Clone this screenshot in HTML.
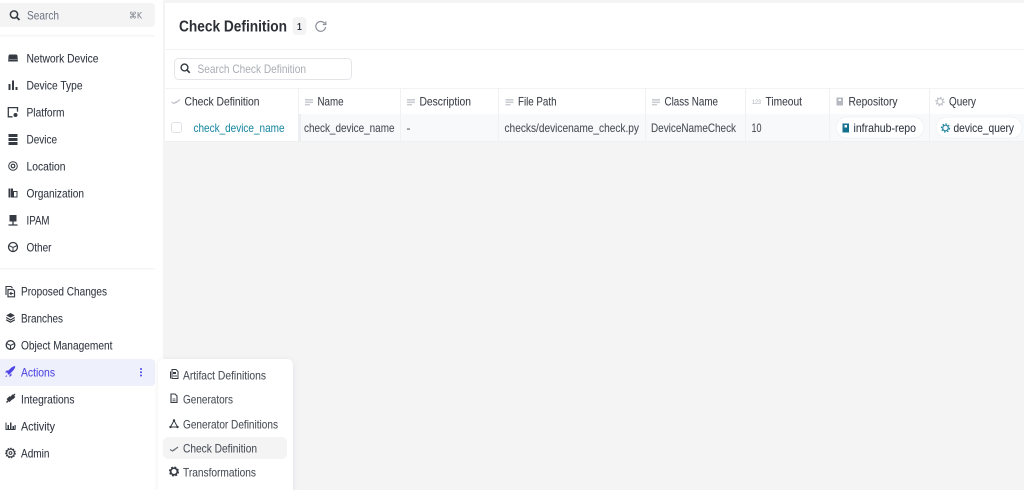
<!DOCTYPE html>
<html><head><meta charset="utf-8"><style>
html,body{margin:0;padding:0;width:1024px;height:490px;overflow:hidden;background:#f4f4f5}
svg{display:block;filter:blur(.3px)}
text{font-family:"Liberation Sans","DejaVu Sans",sans-serif;font-size:11.8px;fill:#3f3f46;stroke:rgba(50,55,65,.3);stroke-width:.2}
.n{fill:#2f3540}
.h{fill:#3a3e46}
.m{fill:#4b4f58}
.i{fill:#363b43;stroke:none}
.o{fill:none;stroke:#363b43;stroke-width:1.3}
.g{fill:#c9ccd1;stroke:none}
.go{fill:none;stroke:#bfc3c9;stroke-width:1.2}
</style></head><body>
<svg width="1024" height="490" viewBox="0 0 1024 490" xmlns="http://www.w3.org/2000/svg">
<defs><filter id="s" x="-20%" y="-20%" width="140%" height="140%"><feDropShadow dx="0" dy="1" stdDeviation="3" flood-color="#000" flood-opacity=".07"/></filter></defs>
<rect width="1024" height="490" fill="#f4f4f5"/>
<!-- sidebar -->
<rect width="163" height="490" fill="#fff"/>
<rect x="-6" y="3" width="161" height="24" rx="4" fill="#f4f4f5"/>
<circle cx="14" cy="14.500" r="3.600" class="o" style="stroke-width:1.500"/><path d="M16.600 17.100 19.500 20" class="o" style="stroke-width:1.700"/>
<text x="27" y="19.500" textLength="32" lengthAdjust="spacingAndGlyphs" style="fill:#6b7280;stroke:none">Search</text>
<text x="129" y="18.500" textLength="13" lengthAdjust="spacingAndGlyphs" style="font-size:9px;fill:#7a8089;stroke:none;font-family:'DejaVu Sans',sans-serif">⌘K</text>
<rect x="0" y="35" width="155" height="1.500" fill="#f6f6f7"/>
<rect x="0" y="268" width="155" height="1.500" fill="#f6f6f7"/>

<text class="n" x="26.500" y="62.300" textLength="72" lengthAdjust="spacingAndGlyphs">Network Device</text>
<text class="n" x="26.500" y="89.300" textLength="56" lengthAdjust="spacingAndGlyphs">Device Type</text>
<text class="n" x="26.500" y="116.300" textLength="38" lengthAdjust="spacingAndGlyphs">Platform</text>
<text class="n" x="26.500" y="143.300" textLength="30.500" lengthAdjust="spacingAndGlyphs">Device</text>
<text class="n" x="26.500" y="170.300" textLength="39" lengthAdjust="spacingAndGlyphs">Location</text>
<text class="n" x="26.500" y="197.300" textLength="57.500" lengthAdjust="spacingAndGlyphs">Organization</text>
<text class="n" x="26.500" y="224.300" textLength="23" lengthAdjust="spacingAndGlyphs">IPAM</text>
<text class="n" x="26.500" y="251.300" textLength="25" lengthAdjust="spacingAndGlyphs">Other</text>

<!-- top icons -->
<path d="M9.500 54.500h6.500q1.200 0 1.500 1.500l.3 5.500h-9.600l.3-5.500q.3-1.500 1-1.500z" class="i"/><rect x="9" y="59" width="8" height=".7" fill="#9aa0a8"/>
<rect x="8.500" y="84" width="2" height="6" class="i"/><rect x="12" y="80.500" width="2" height="9.500" class="i"/><rect x="15.500" y="87" width="2" height="3" class="i"/>
<path d="M12.500 116.800H8.300v-9.200h9.200v4" class="o"/><circle cx="15.500" cy="115" r="2" class="i"/>
<rect x="8.500" y="134" width="9" height="3" class="i"/><rect x="8.500" y="138" width="9" height="3" class="i"/><rect x="8.500" y="142" width="9" height="3" class="i"/>
<circle cx="13" cy="166" r="4.300" class="o" style="stroke-width:1"/><circle cx="13" cy="166" r="1.800" class="o" style="stroke-width:1.200"/>
<path d="M8.500 188.500h4.500v9h-4.500z" class="i"/><path d="M13.500 191.500h3.500v5.500h-3.500z" class="o" style="stroke-width:1"/><path d="M10.700 188.500v9" stroke="#fff" stroke-width=".5"/>
<rect x="9.500" y="215" width="7" height="6.500" class="i"/><path d="M13 221.500v3M8.500 225h9" class="o"/>
<circle cx="13" cy="247" r="4.500" class="o"/><path d="M8.800 245.500 13 247.500l4.200-2M13 247.500v4" class="o" style="stroke-width:1"/>

<text class="n" x="21" y="295.300" textLength="86" lengthAdjust="spacingAndGlyphs">Proposed Changes</text>
<text class="n" x="21" y="322.300" textLength="42" lengthAdjust="spacingAndGlyphs">Branches</text>
<text class="n" x="21" y="349.300" textLength="91.500" lengthAdjust="spacingAndGlyphs">Object Management</text>
<rect x="-6" y="359" width="161" height="27" rx="4" fill="#eef0fc"/>
<text x="21" y="376.300" textLength="34" lengthAdjust="spacingAndGlyphs" style="fill:#4f46e5;stroke:rgba(79,70,229,.3)">Actions</text>
<circle cx="141" cy="369" r="1" fill="#4f46e5"/><circle cx="141" cy="372.300" r="1" fill="#4f46e5"/><circle cx="141" cy="375.500" r="1" fill="#4f46e5"/>
<text class="n" x="21" y="403.300" textLength="53.500" lengthAdjust="spacingAndGlyphs">Integrations</text>
<text class="n" x="21" y="430.300" textLength="34" lengthAdjust="spacingAndGlyphs">Activity</text>
<text class="n" x="21" y="457.300" textLength="28.500" lengthAdjust="spacingAndGlyphs">Admin</text>

<!-- bottom icons -->
<path d="M6 295v-8.500h5l1.500 1.500" class="o" style="stroke-width:1.100"/><path d="M8 296.800v-7.300h5l1.500 1.500v5.800z" class="o" style="stroke-width:1.200"/><path d="M9.800 293.500h3.500M11.500 292l-1.700 1.500 1.700 1.500" class="o" style="stroke-width:.9"/>
<path d="M10.500 313l4.300 2.400-4.300 2.400-4.300-2.400z" class="i"/><path d="M6.200 317.500l4.300 2.400 4.300-2.400M6.200 319.800l4.300 2.400 4.300-2.400" class="o" style="stroke-width:1.200"/>
<circle cx="10.500" cy="345" r="4.300" class="o"/><path d="M6.500 343.500 10.500 345.500l4-2M10.500 345.500v3.700" class="o" style="stroke-width:1"/>
<path d="M8 374.500 7 371.800l4.500-4.300q2.500-1.500 3.800-1.500 0 1.800-1.500 3.800l-4.300 4.700zM7 372.500H5l1.500-2h2zM9.500 375v2l2-1.500v-2zM6.800 375l-1.800 2.200 2.200-1z" fill="#4f46e5"/>
<path d="M6.500 402.500l3-3M12 397l3-3" class="o" style="stroke-width:1.400"/><rect x="7.500" y="397" width="4.200" height="4.200" transform="rotate(45 9.500 399)" class="i"/><rect x="11" y="395" width="3.800" height="3.800" transform="rotate(45 12.700 396.700)" class="i"/>
<path d="M6 422.500v7h9.500" class="o" style="stroke-width:1"/><rect x="7.500" y="425" width="1.500" height="4" class="i"/><rect x="10" y="422.500" width="1.500" height="6.500" class="i"/><rect x="12.500" y="426" width="1.500" height="3" class="i"/><rect x="14.500" y="425" width="1.200" height="4" class="i"/>
<circle cx="10.500" cy="453" r="3.900" class="o" style="stroke-width:1.100"/><circle cx="10.500" cy="453" r="4.700" fill="none" stroke="#363b43" stroke-width="1.200" stroke-dasharray="1.600 1.100"/><circle cx="10.500" cy="453" r="1.400" class="o" style="stroke-width:1"/>

<!-- main card -->
<rect x="165" y="3" width="859" height="138" fill="#fff"/>
<rect x="165" y="49" width="859" height="1" fill="#f3f3f5"/>
<text x="179" y="31.300" textLength="108" lengthAdjust="spacingAndGlyphs" style="font-size:15.500px;font-weight:bold;fill:#2b2f35;stroke:none">Check Definition</text>
<rect x="292.500" y="17" width="14" height="18" rx="4" fill="#f4f4f5"/>
<text x="297" y="30" textLength="4.800" lengthAdjust="spacingAndGlyphs" style="font-size:10.500px;fill:#333a45;font-weight:bold;stroke:none">1</text>
<path d="M324.700 23.500A4.900 4.900 0 1 0 325.600 27" class="go" style="stroke:#8b9098"/><path d="M325.800 21.500v3h-3" class="go" style="stroke:#8b9098"/>

<rect x="174.500" y="58.500" width="177" height="21" rx="4" fill="#fff" stroke="#e4e5e8"/>
<circle cx="184.500" cy="67.500" r="3.400" class="o" style="stroke-width:1.400"/><path d="M187 70l2.800 2.800" class="o" style="stroke-width:1.600"/>
<text x="197.500" y="73.200" textLength="108.500" lengthAdjust="spacingAndGlyphs" style="fill:#a9adb4;stroke:none">Search Check Definition</text>

<!-- table -->
<rect x="165" y="88" width="859" height="1" fill="#f3f3f5"/>
<rect x="165" y="114" width="859" height="27" fill="#f7f9fb"/>
<rect x="165" y="114" width="133" height="27" fill="#fff"/>
<rect x="165" y="141" width="859" height="1" fill="#eff0f2"/>
<rect x="298" y="114" width="3" height="27" fill="#eceef1"/>
<g fill="#f0f1f3"><rect x="298" y="88" width="1" height="26"/><rect x="400" y="88" width="1" height="53"/><rect x="498" y="88" width="1" height="53"/><rect x="645" y="88" width="1" height="53"/><rect x="745" y="88" width="1" height="53"/><rect x="829" y="88" width="1" height="53"/><rect x="929" y="88" width="1" height="53"/></g>

<text class="h" x="184.500" y="105.300" textLength="75" lengthAdjust="spacingAndGlyphs">Check Definition</text>
<text class="h" x="317.500" y="105.300" textLength="26" lengthAdjust="spacingAndGlyphs">Name</text>
<text class="h" x="419.500" y="105.300" textLength="51.500" lengthAdjust="spacingAndGlyphs">Description</text>
<text class="h" x="518" y="105.300" textLength="38.500" lengthAdjust="spacingAndGlyphs">File Path</text>
<text class="h" x="664.500" y="105.300" textLength="53.500" lengthAdjust="spacingAndGlyphs">Class Name</text>
<text class="h" x="765.500" y="105.300" textLength="36.500" lengthAdjust="spacingAndGlyphs">Timeout</text>
<text class="h" x="848.500" y="105.300" textLength="49" lengthAdjust="spacingAndGlyphs">Repository</text>
<text class="h" x="949" y="105.300" textLength="27" lengthAdjust="spacingAndGlyphs">Query</text>

<!-- header icons -->
<path d="M171.500 102l2.500 1.500 2.500-2M175.500 103l4.500-3.500" class="go"/>
<g class="g"><rect x="305" y="99" width="8" height="1.600"/><rect x="305" y="101.500" width="8" height="1.600"/><rect x="305" y="104" width="5" height="1.400"/></g>
<g class="g"><rect x="407" y="99" width="8" height="1.600"/><rect x="407" y="101.500" width="8" height="1.600"/><rect x="407" y="104" width="5" height="1.400"/></g>
<g class="g"><rect x="505.500" y="99" width="8" height="1.600"/><rect x="505.500" y="101.500" width="8" height="1.600"/><rect x="505.500" y="104" width="5" height="1.400"/></g>
<g class="g"><rect x="652" y="99" width="8" height="1.600"/><rect x="652" y="101.500" width="8" height="1.600"/><rect x="652" y="104" width="5" height="1.400"/></g>
<text x="752" y="104" textLength="9" lengthAdjust="spacingAndGlyphs" style="font-size:6px;fill:#a8acb3;stroke:none">123</text>
<rect x="836.500" y="97.500" width="6.500" height="8" class="g" style="fill:#b4b8bf"/><rect x="838.500" y="99" width="2.500" height="2" fill="#fff"/>
<circle cx="940" cy="101.500" r="2.900" class="go"/><circle cx="940" cy="101.500" r="4.100" class="go" stroke-dasharray="1.500 1.700"/>

<!-- row -->
<rect x="171.500" y="122.500" width="10" height="10" rx="2.500" fill="#fff" stroke="#dfe1e5"/>
<text x="193.500" y="132" textLength="91" lengthAdjust="spacingAndGlyphs" style="fill:#1f8ba3;stroke:rgba(31,139,163,.3)">check_device_name</text>
<text x="304" y="132" textLength="90.500" lengthAdjust="spacingAndGlyphs" class="m">check_device_name</text>
<text x="406.500" y="132" class="m">-</text>
<text x="504.500" y="132" textLength="134.500" lengthAdjust="spacingAndGlyphs" class="m">checks/devicename_check.py</text>
<text x="651" y="132" textLength="85" lengthAdjust="spacingAndGlyphs" class="m">DeviceNameCheck</text>
<text x="751.500" y="132" textLength="10" lengthAdjust="spacingAndGlyphs" class="m">10</text>

<rect x="836" y="117" width="88" height="21" rx="10.500" fill="#fff" stroke="#eef0f2" stroke-width=".8"/>
<rect x="842.500" y="123.500" width="6.500" height="9" fill="#14708f"/><rect x="844.500" y="125" width="2.500" height="2.500" fill="#fff"/>
<text x="853.500" y="132" textLength="62.500" lengthAdjust="spacingAndGlyphs" class="n">infrahub-repo</text>
<rect x="936" y="117" width="86" height="21" rx="10.500" fill="#fff" stroke="#eef0f2" stroke-width=".8"/>
<circle cx="945.500" cy="128" r="2.800" fill="none" stroke="#2a87a3" stroke-width="1.200"/><circle cx="945.500" cy="128" r="4" fill="none" stroke="#2a87a3" stroke-width="1.300" stroke-dasharray="1.500 1.600"/>
<text x="953.500" y="132" textLength="60.500" lengthAdjust="spacingAndGlyphs" class="n">device_query</text>

<!-- popup -->
<rect x="158" y="359" width="135" height="140" rx="6" fill="#fff" filter="url(#s)"/>
<rect x="163" y="437" width="124" height="22" rx="5" fill="#f4f4f5"/>
<text class="m" x="183" y="379.300" textLength="83" lengthAdjust="spacingAndGlyphs">Artifact Definitions</text>
<text class="m" x="183" y="403.300" textLength="50" lengthAdjust="spacingAndGlyphs">Generators</text>
<text class="m" x="183" y="428.300" textLength="95" lengthAdjust="spacingAndGlyphs">Generator Definitions</text>
<text class="m" x="183" y="452.300" textLength="74" lengthAdjust="spacingAndGlyphs">Check Definition</text>
<text class="m" x="183" y="476.300" textLength="73" lengthAdjust="spacingAndGlyphs">Transformations</text>

<path d="M170.500 378.500v-7M172 378.500v-9h4l2 2v7z" class="o" style="stroke-width:1"/><rect x="173" y="372" width="3" height="2" class="i"/><path d="M173 376h4" class="o" style="stroke-width:.9"/>
<path d="M171 402.500v-8.500h4l2 2v6.500z" class="o" style="stroke-width:1.100"/><path d="M172.500 399h3M172.500 400.800h3" class="o" style="stroke-width:.8"/>
<path d="M174 420.500l-3.500 6.500h7z" class="o" style="stroke-width:1"/><circle cx="174" cy="420.500" r="1.200" class="i"/><circle cx="170.500" cy="427" r="1.200" class="i"/><circle cx="177.500" cy="427" r="1.200" class="i"/>
<path d="M170 449.500l2.500 1.500 2.500-2M173.500 450.500l4.500-3.500" fill="none" stroke="#6b7078" stroke-width="1.200"/>
<circle cx="174" cy="471.500" r="3.300" fill="none" stroke="#363b43" stroke-width="1.600"/><circle cx="174" cy="471.500" r="4.400" fill="none" stroke="#363b43" stroke-width="1.300" stroke-dasharray="2 1.500"/>
</svg>
</body></html>
